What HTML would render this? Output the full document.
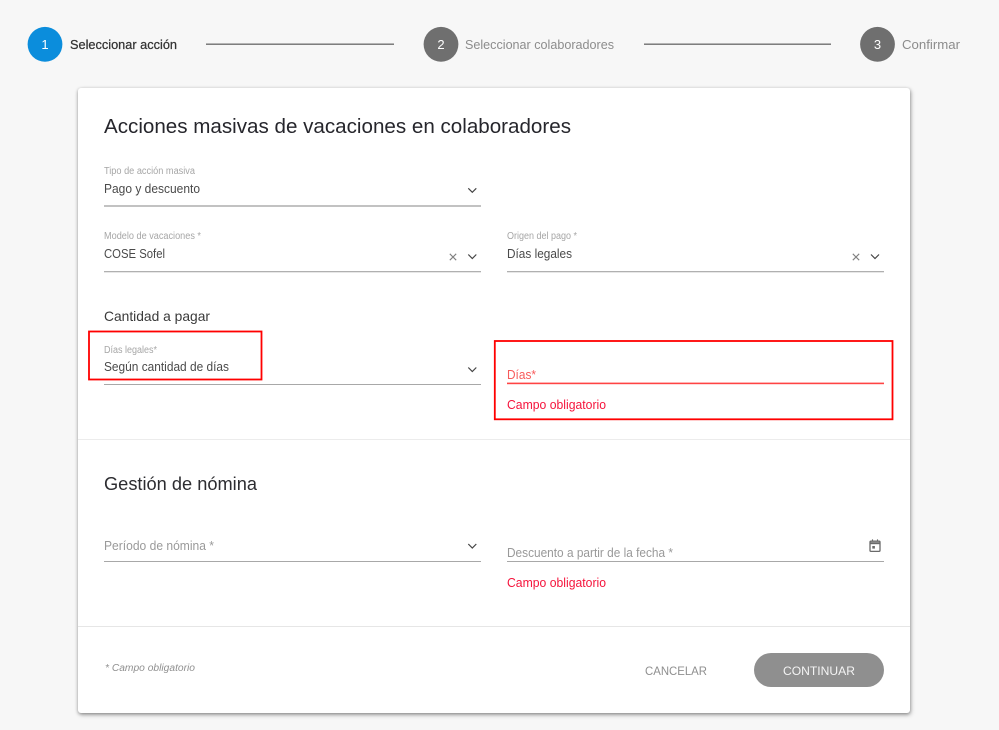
<!DOCTYPE html>
<html lang="es">
<head>
<meta charset="utf-8">
<title>Acciones masivas</title>
<style>
html,body{margin:0;padding:0;width:999px;height:730px;overflow:hidden;background:#f7f7f7}
svg{display:block;position:absolute;left:0;top:0}
text{font-family:"Liberation Sans",Arial,sans-serif}
.card{position:absolute;left:78px;top:88px;width:832px;height:625px;background:#fff;border-radius:3px;box-shadow:0 1px 3px rgba(0,0,0,.3),1px 2px 5px rgba(0,0,0,.25)}
</style>
</head>
<body>
<div class="card"></div>
<svg width="999" height="730" viewBox="0 0 999 730" xmlns="http://www.w3.org/2000/svg">
  <defs>
    <path id="chev" d="M-4,-2 L0,2 L4,-2" fill="none" stroke="#444" stroke-width="1.2"/>
    <path id="x" d="M-3.2,-3.2 L3.2,3.2 M3.2,-3.2 L-3.2,3.2" fill="none" stroke="#808080" stroke-width="1.1"/>
  </defs>

  <!-- stepper -->
  <circle cx="45" cy="44.3" r="17.4" fill="#0b8ddc"/>
  <circle cx="441" cy="44.3" r="17.4" fill="#6f6f6f"/>
  <circle cx="877.5" cy="44.3" r="17.4" fill="#6f6f6f"/>
  <text x="45" y="49" fill="#fff" font-size="13" text-anchor="middle">1</text>
  <text x="441" y="49" fill="#fff" font-size="13" text-anchor="middle">2</text>
  <text x="877.5" y="49" fill="#fff" font-size="13" text-anchor="middle">3</text>
  <text x="70" y="49" fill="#333" font-size="13" stroke="#333" stroke-width=".25" textLength="107" lengthAdjust="spacingAndGlyphs">Seleccionar acción</text>
  <text x="465" y="49" fill="#8c8c8c" font-size="13" textLength="149" lengthAdjust="spacingAndGlyphs">Seleccionar colaboradores</text>
  <text x="902" y="49" fill="#8c8c8c" font-size="13" textLength="58" lengthAdjust="spacingAndGlyphs">Confirmar</text>
  <rect x="206" y="43.5" width="188" height="1.4" fill="#707070"/>
  <rect x="644" y="43.5" width="187" height="1.4" fill="#707070"/>

  <!-- title -->
  <text x="104" y="133" fill="#26262c" font-size="20" textLength="467" lengthAdjust="spacingAndGlyphs">Acciones masivas de vacaciones en colaboradores</text>

  <!-- tipo -->
  <text x="104" y="174" fill="#a6a6a6" font-size="10" textLength="91" lengthAdjust="spacingAndGlyphs">Tipo de acción masiva</text>
  <text x="104" y="193" fill="#4a4a4a" font-size="12.5" textLength="96" lengthAdjust="spacingAndGlyphs">Pago y descuento</text>
  <rect x="104" y="205" width="377" height="2" fill="#c2c2c2"/>
  <use href="#chev" x="472.3" y="190.3"/>

  <!-- modelo -->
  <text x="104" y="239" fill="#a6a6a6" font-size="10" textLength="97" lengthAdjust="spacingAndGlyphs">Modelo de vacaciones *</text>
  <text x="104" y="258" fill="#4a4a4a" font-size="12.5" textLength="61" lengthAdjust="spacingAndGlyphs">COSE Sofel</text>
  <rect x="104" y="271" width="377" height="1.3" fill="#b0b0b0"/>
  <use href="#x" x="453" y="257"/>
  <use href="#chev" x="472.3" y="256.5"/>

  <!-- origen -->
  <text x="507" y="239" fill="#a6a6a6" font-size="10" textLength="70" lengthAdjust="spacingAndGlyphs">Origen del pago *</text>
  <text x="507" y="258" fill="#4a4a4a" font-size="12.5" textLength="65" lengthAdjust="spacingAndGlyphs">Días legales</text>
  <rect x="507" y="271" width="377" height="1.3" fill="#b0b0b0"/>
  <use href="#x" x="856" y="257"/>
  <use href="#chev" x="875" y="256.5"/>

  <!-- cantidad -->
  <text x="104" y="321" fill="#3a3a3a" font-size="14" textLength="106" lengthAdjust="spacingAndGlyphs">Cantidad a pagar</text>
  <text x="104" y="353" fill="#a6a6a6" font-size="10" textLength="53" lengthAdjust="spacingAndGlyphs">Días legales*</text>
  <text x="104" y="371" fill="#4a4a4a" font-size="12.5" textLength="125" lengthAdjust="spacingAndGlyphs">Según cantidad de días</text>
  <rect x="104" y="384" width="377" height="1" fill="#a8a8a8"/>
  <use href="#chev" x="472.3" y="369.5"/>
  <rect x="89" y="331.5" width="172.5" height="48" fill="none" stroke="#f00" stroke-width="1.8"/>

  <!-- dias -->
  <rect x="494.8" y="341" width="397.7" height="78.3" fill="none" stroke="#f00" stroke-width="1.8"/>
  <text x="507" y="379" fill="#f75a5a" font-size="12.5" textLength="29" lengthAdjust="spacingAndGlyphs">Días*</text>
  <rect x="507" y="382.6" width="377" height="1.6" fill="#ff4444"/>
  <text x="507" y="409" fill="#f5143c" font-size="12.5" textLength="99" lengthAdjust="spacingAndGlyphs">Campo obligatorio</text>

  <rect x="78" y="439" width="832" height="1" fill="#ececec"/>

  <!-- gestion -->
  <text x="104" y="490" fill="#2c2c30" font-size="18" textLength="153" lengthAdjust="spacingAndGlyphs">Gestión de nómina</text>
  <text x="104" y="550" fill="#9a9a9a" font-size="12.5" textLength="110" lengthAdjust="spacingAndGlyphs">Período de nómina *</text>
  <rect x="104" y="561" width="377" height="1" fill="#a8a8a8"/>
  <use href="#chev" x="472.3" y="546"/>

  <text x="507" y="557" fill="#999" font-size="12.5" textLength="166" lengthAdjust="spacingAndGlyphs">Descuento a partir de la fecha *</text>
  <rect x="507" y="561" width="377" height="1" fill="#a8a8a8"/>
  <text x="507" y="587" fill="#f5143c" font-size="12.5" textLength="99" lengthAdjust="spacingAndGlyphs">Campo obligatorio</text>
  <g fill="none" stroke="#6a6a6a">
    <rect x="870" y="541.2" width="10" height="10.2" rx="1" stroke-width="1.3"/>
    <path d="M870,543.2 H880" stroke-width="2"/>
    <path d="M872.5,539.4 V541.5 M877.5,539.4 V541.5" stroke-width="1.1"/>
  </g>
  <rect x="872.3" y="546" width="2.6" height="2.6" fill="#6a6a6a"/>

  <rect x="78" y="626" width="832" height="1" fill="#e6e6e6"/>

  <!-- footer -->
  <text x="105" y="671" fill="#8f8f8f" font-size="10" font-style="italic" textLength="90" lengthAdjust="spacingAndGlyphs">* Campo obligatorio</text>
  <text x="645" y="675" fill="#8f8f8f" font-size="12" textLength="62" lengthAdjust="spacingAndGlyphs">CANCELAR</text>
  <rect x="754" y="653" width="130" height="34" rx="17" fill="#8f8f8f"/>
  <text x="783" y="675" fill="#f4f4f4" font-size="12" textLength="72" lengthAdjust="spacingAndGlyphs">CONTINUAR</text>
</svg>
</body>
</html>
